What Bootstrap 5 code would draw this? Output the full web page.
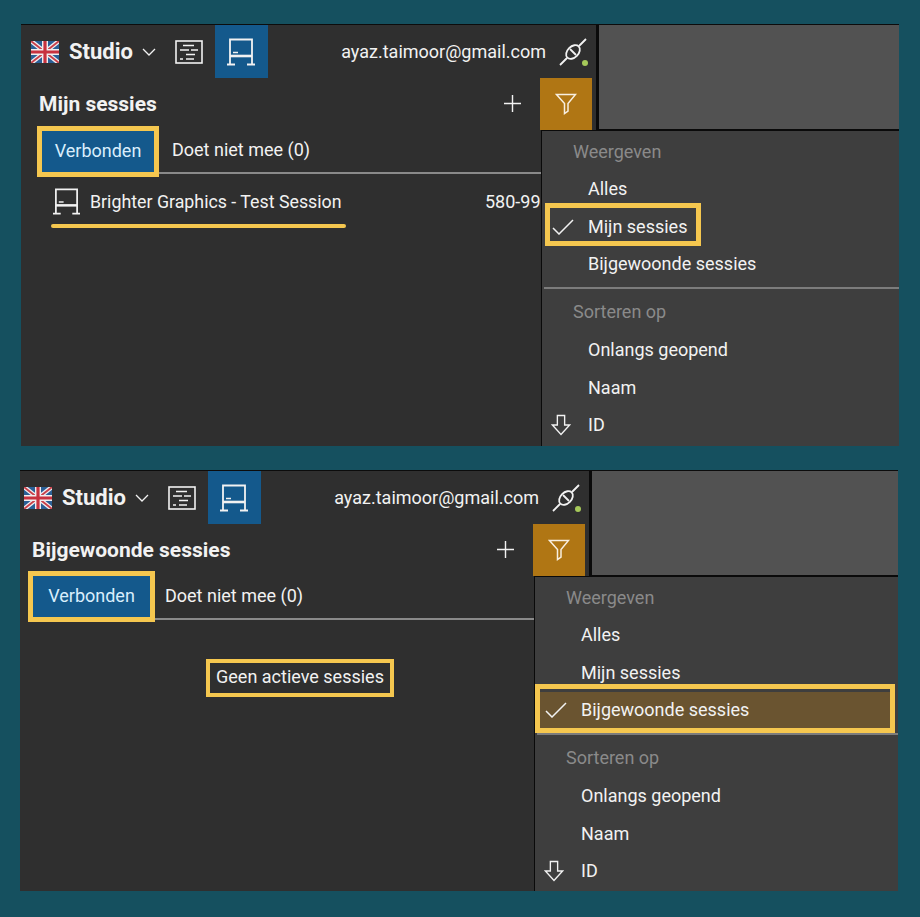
<!DOCTYPE html>
<html lang="nl">
<head>
<meta charset="utf-8">
<title>Studio</title>
<link href="https://cdn.jsdelivr.net/npm/bootstrap@5.3.0/dist/css/bootstrap.min.css" rel="stylesheet">
<style>
html,body{height:917px;overflow:hidden}
body{background:#15505f;font-family:Roboto,"Liberation Sans",sans-serif;color:#f2f2f2;font-size:18px;line-height:1.2}
.appframe{width:878px;height:422px;background:#2f2f2f;border-top:1px solid #0c0c0c;overflow:hidden;position:relative}
.frame-a{margin:24px 0 0 21px}
.frame-b{margin:24px 0 0 20px;height:421px}
.sidepane{flex:none;border-right:3px solid #0a0a0a;height:100%;overflow:hidden}
.frame-a .sidepane{width:578px}
.frame-b .sidepane{width:572px}
.greypane{height:105px;background:#525252;flex:1;border-bottom:1px solid #0a0a0a}
.topbar{height:53px;padding-right:9px}
.frame-a .topbar,.frame-a .titlebar{padding-left:10px}
.frame-b .topbar,.frame-b .titlebar{padding-left:4px}
.studio{font-size:22px;font-weight:700;margin:2px 0 0 10px}
.chev{margin-left:9px}
.scripticon{margin-left:19px}
.boardtab{width:53px;height:53px;background:#14598c;margin-left:12px}
.email{font-size:18px;margin-right:13px}
.titlebar{height:53px;padding-right:4px}
.titlebar span{font-size:21px;font-weight:700;margin-left:8px}
.addbtn{margin:0 19px 3px 0}
.filterbtn{width:52px;height:52px;background:#b07614;margin-bottom:1px}
.tabbar{height:43px;border-bottom:2px solid #8a8a8a}
.frame-a .tabbar{margin-left:20px}
.frame-b .tabbar{margin-left:13px}
.seltab{height:41px;padding-bottom:2px;background:#14598c;color:#d9eefc;outline:5px solid #f5c74f}
.frame-a .seltab{width:112px;margin-left:1px}
.frame-b .seltab{width:117px;margin-top:-1px}
.othertab{padding-bottom:3px}
.frame-a .othertab{margin-left:18px}
.frame-b .othertab{margin-left:15px}
.sessionrow{padding:14px 0 0 32px;width:100%}
.sessionname{margin-left:10px;width:395px;flex:none;white-space:nowrap;font-size:17.8px}
.yline{height:4px;width:295px;background:#f5c74f;border-radius:2px;margin:9px 0 0 30px}
.emptybox{border:4px solid #f5c74f;width:188px;height:38px;margin:39px 0 0 186px;padding-bottom:2px;white-space:nowrap}
.filtermenu{position:absolute;top:105px;bottom:0;background:#3e3e3e;border-left:1px solid #0a0a0a;border-top:1px solid #0a0a0a;right:0;width:358px}
.frame-b .filtermenu{width:364px}
.menuhead{height:39.5px;padding:3px 0 0 31px;color:#8a8a8a}
.menuhead-low{padding-top:1px}
.menurow{height:37.5px;padding-left:46px}
.tickmark{position:absolute;left:10px;top:50%;margin-top:-8px}
.arrowmark{position:absolute;left:9px;top:50%;margin-top:-12px}
.markbox{position:absolute;border:5px solid #f5c74f;pointer-events:none}
.mark-short{left:3px;top:-5px;width:156px;height:43px}
.mark-wide{left:0;top:-7.500px;right:0;height:49px}
.chosen{background:#6a5430;margin-right:3px}
.menusep{height:2px;background:#7c7c7c;margin:4px 0 3px 2px}
</style>
</head>
<body>
<svg width="0" height="0" class="d-block">
<defs>
<symbol id="flag" viewBox="0 0 28 22">
<rect width="28" height="22" fill="#2a5f96"/>
<path d="M0 0L28 22M28 0L0 22" stroke="#f0eef0" stroke-width="4.500"/>
<path d="M0 0L28 22M28 0L0 22" stroke="#c8404a" stroke-width="1.800"/>
<path d="M14 0V22M0 11H28" stroke="#f0eef0" stroke-width="6"/>
<path d="M14 0V22M0 11H28" stroke="#c8323f" stroke-width="3.200"/>
</symbol>
<symbol id="script" viewBox="0 0 28 24">
<g fill="none" stroke="#f2f2f2" stroke-width="1.6">
<rect x="1" y="1" width="26" height="22"/>
<path d="M8 5.500H19M5 10H14M16 10H23M11 14.500H20M5 19H8M11 19H19"/>
</g>
</symbol>
<symbol id="board" viewBox="0 0 28 28">
<g fill="none" stroke="#f2f2f2" stroke-width="1.800">
<path d="M3 26V1.500H25V26"/>
<path d="M3 18H25" stroke-width="2.600"/>
<path d="M0 26.500H8M20 26.500H28"/>
<path d="M6 14.500H11" stroke-width="1.500"/>
</g>
</symbol>
<symbol id="plug" viewBox="0 0 28 28">
<g fill="none" stroke="#f2f2f2" stroke-width="1.800">
<path d="M1 27L8 20M20 8L27 1"/>
<ellipse cx="14" cy="14" rx="8" ry="5.500" transform="rotate(-45 14 14)"/>
<path d="M11 11L17 17"/>
</g>
</symbol>
<symbol id="funnel" viewBox="0 0 22 22">
<path d="M1.500 1.500H20.500L13 10.500V18L9.500 20.500V10.500Z" fill="none" stroke="#f8efe0" stroke-width="1.500"/>
</symbol>
<symbol id="tick" viewBox="0 0 22 16">
<path d="M1 9L7 15L21 1" fill="none" stroke="#f2f2f2" stroke-width="1.500"/>
</symbol>
<symbol id="downarrow" viewBox="0 0 22 24">
<path d="M7 1.500H15V12H20.500L11 22.500L1.500 12H7Z" fill="none" stroke="#f2f2f2" stroke-width="1.500"/>
</symbol>
</defs>
</svg>

<div class="appframe frame-a d-flex">
  <div class="sidepane">
    <div class="topbar d-flex align-items-center">
      <svg width="28" height="22"><use href="#flag"/></svg>
      <span class="studio">Studio</span>
      <svg class="chev" width="14" height="8" viewBox="0 0 14 8"><path d="M1 1L7 7L13 1" fill="none" stroke="#f2f2f2" stroke-width="1.300"/></svg>
      <svg class="scripticon" width="28" height="24"><use href="#script"/></svg>
      <div class="boardtab d-flex align-items-center justify-content-center"><svg width="28" height="28"><use href="#board"/></svg></div>
      <span class="email ms-auto">ayaz.taimoor@gmail.com</span>
      <div class="position-relative d-flex"><svg width="28" height="28"><use href="#plug"/></svg><svg class="position-absolute top-100 start-100" width="6" height="6" style="margin:-6px 0 0 -5px"><circle cx="3" cy="3" r="3" fill="#a6c95a"/></svg></div>
    </div>
    <div class="titlebar d-flex align-items-center">
      <span>Mijn sessies</span>
      <svg class="addbtn ms-auto" width="17" height="17" viewBox="0 0 18 18"><path d="M9 0V18M0 9H18" stroke="#f2f2f2" stroke-width="1.500"/></svg>
      <div class="filterbtn d-flex align-items-center justify-content-center"><svg width="22" height="22"><use href="#funnel"/></svg></div>
    </div>
    <div class="tabbar d-flex">
      <div class="seltab d-flex align-items-center justify-content-center">Verbonden</div>
      <div class="othertab d-flex align-items-center">Doet niet mee (0)</div>
    </div>
    <div class="sessionrow d-flex align-items-center">
      <svg width="27" height="27"><use href="#board"/></svg>
      <span class="sessionname">Brighter Graphics - Test Session</span>
      <span>580-995</span>
    </div>
    <div class="yline"></div>
  </div>
  <div class="greypane"></div>
  <div class="filtermenu">
    <div class="menuhead d-flex align-items-center">Weergeven</div>
    <div class="menurow d-flex align-items-center">Alles</div>
    <div class="menurow d-flex align-items-center position-relative">
      <svg class="tickmark" width="22" height="16"><use href="#tick"/></svg>Mijn sessies
      <div class="markbox mark-short"></div>
    </div>
    <div class="menurow d-flex align-items-center">Bijgewoonde sessies</div>
    <div class="menusep"></div>
    <div class="menuhead menuhead-low d-flex align-items-center">Sorteren op</div>
    <div class="menurow d-flex align-items-center">Onlangs geopend</div>
    <div class="menurow d-flex align-items-center">Naam</div>
    <div class="menurow d-flex align-items-center position-relative">
      <svg class="arrowmark" width="20" height="24"><use href="#downarrow"/></svg>ID
    </div>
  </div>
</div>

<div class="appframe frame-b d-flex">
  <div class="sidepane">
    <div class="topbar d-flex align-items-center">
      <svg width="28" height="22"><use href="#flag"/></svg>
      <span class="studio">Studio</span>
      <svg class="chev" width="14" height="8" viewBox="0 0 14 8"><path d="M1 1L7 7L13 1" fill="none" stroke="#f2f2f2" stroke-width="1.300"/></svg>
      <svg class="scripticon" width="28" height="24"><use href="#script"/></svg>
      <div class="boardtab d-flex align-items-center justify-content-center"><svg width="28" height="28"><use href="#board"/></svg></div>
      <span class="email ms-auto">ayaz.taimoor@gmail.com</span>
      <div class="position-relative d-flex"><svg width="28" height="28"><use href="#plug"/></svg><svg class="position-absolute top-100 start-100" width="6" height="6" style="margin:-6px 0 0 -5px"><circle cx="3" cy="3" r="3" fill="#a6c95a"/></svg></div>
    </div>
    <div class="titlebar d-flex align-items-center">
      <span>Bijgewoonde sessies</span>
      <svg class="addbtn ms-auto" width="17" height="17" viewBox="0 0 18 18"><path d="M9 0V18M0 9H18" stroke="#f2f2f2" stroke-width="1.500"/></svg>
      <div class="filterbtn d-flex align-items-center justify-content-center"><svg width="22" height="22"><use href="#funnel"/></svg></div>
    </div>
    <div class="tabbar d-flex">
      <div class="seltab d-flex align-items-center justify-content-center">Verbonden</div>
      <div class="othertab d-flex align-items-center">Doet niet mee (0)</div>
    </div>
    <div class="emptybox d-flex align-items-center justify-content-center">Geen actieve sessies</div>
  </div>
  <div class="greypane"></div>
  <div class="filtermenu">
    <div class="menuhead d-flex align-items-center">Weergeven</div>
    <div class="menurow d-flex align-items-center">Alles</div>
    <div class="menurow d-flex align-items-center">Mijn sessies</div>
    <div class="menurow chosen d-flex align-items-center position-relative">
      <svg class="tickmark" width="22" height="16"><use href="#tick"/></svg>Bijgewoonde sessies
      <div class="markbox mark-wide"></div>
    </div>
    <div class="menusep"></div>
    <div class="menuhead menuhead-low d-flex align-items-center">Sorteren op</div>
    <div class="menurow d-flex align-items-center">Onlangs geopend</div>
    <div class="menurow d-flex align-items-center">Naam</div>
    <div class="menurow d-flex align-items-center position-relative">
      <svg class="arrowmark" width="20" height="24"><use href="#downarrow"/></svg>ID
    </div>
  </div>
</div>
<script src="https://cdn.jsdelivr.net/npm/bootstrap@5.3.0/dist/js/bootstrap.bundle.min.js"></script>
</body>
</html>
